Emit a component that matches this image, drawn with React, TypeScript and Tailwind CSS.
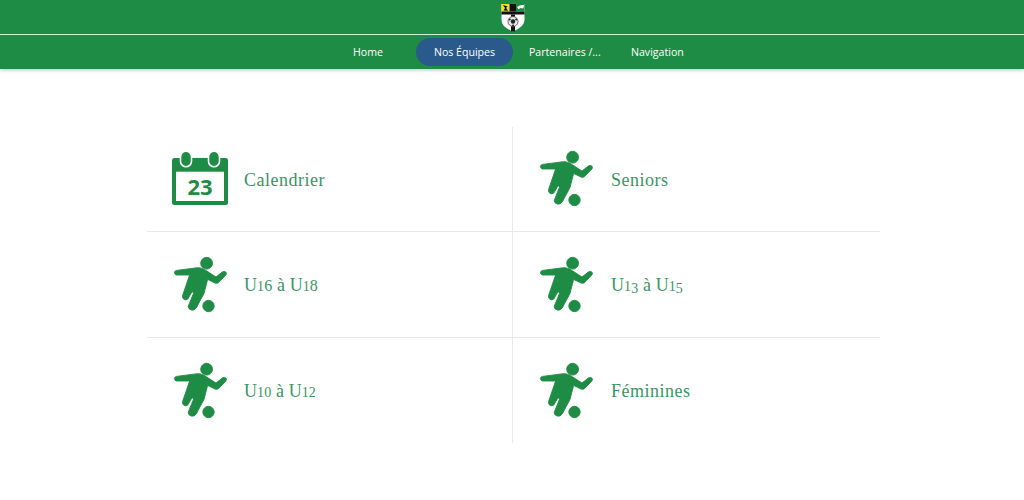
const GREEN = '#1e8c45';

function PlayerIcon() {
  return (
    <svg viewBox="0 0 60 60" className="w-[60px] h-[60px] shrink-0" fill={GREEN} stroke={GREEN} strokeWidth="0.9" strokeLinejoin="round">
      <circle cx="35.6" cy="7.2" r="5.9" />
      <circle cx="37.5" cy="50" r="5.7" />
      <path
        d="M5.5 14.4 L26.3 11.7 Q30 11.4 33 13.3 L45 21 L51.6 15.8 Q53.8 14.8 55.2 16.4 Q55.8 18 54.8 19 L47.6 26.6 Q46 27.8 44 27 L36.6 23.4 L33 37.4 L25.2 52 Q23.2 54.8 20.2 54 Q17.2 53 17.2 50.4 L22.4 37.6 L21.4 35 L16.8 43 Q14.8 44.6 12.8 43.2 Q11 41.6 11.6 39.4 L18.6 19 L5.5 19 Q3.6 18.6 3.4 16.6 Q3.6 14.8 5.5 14.4 Z"
      />
    </svg>
  );
}

function CalendarIcon() {
  return (
    <svg viewBox="0 0 60 60" className="w-[60px] h-[60px] shrink-0">
      <rect x="1" y="8" width="56" height="47" rx="2.5" fill={GREEN} />
      <rect x="5" y="21.7" width="48" height="29.3" fill="#fff" />
      <rect x="9.5" y="1.2" width="11" height="15.6" rx="5.5" fill={GREEN} stroke="#fff" strokeWidth="1.6" />
      <rect x="37.5" y="1.2" width="11" height="15.6" rx="5.5" fill={GREEN} stroke="#fff" strokeWidth="1.6" />
      <text
        x="29"
        y="44.5"
        textAnchor="middle"
        fontFamily="'Open Sans', sans-serif"
        fontWeight="700"
        fontSize="22"
        fill={GREEN}
      >
        23
      </text>
    </svg>
  );
}

function Crest() {
  return (
    <svg viewBox="0 0 26 30" className="w-[26px] h-[30px]">
      <path d="M1.5 2 H24.5 V18 Q24.5 25 13 29.5 Q1.5 25 1.5 18 Z" fill="#fff" />
      <rect x="1.5" y="2" width="8" height="7.5" fill="#f1e21c" />
      <path d="M3 3 L7.8 4.4 L6 5.8 L8 8.8 L3.6 8.4 L5 6 Z" fill="#111" />
      <rect x="9.5" y="2" width="6.5" height="7.5" fill="#111" />
      <rect x="16" y="2" width="8.5" height="7.5" fill="#1c8a45" />
      <path d="M17 5 Q20 2.6 24.2 3.2 L23.2 6.6 L20.5 6 L18.6 7.2 Z" fill="#fff" />
      <rect x="1.5" y="9.5" width="23" height="3" fill="#111" />
      <rect x="11" y="12.5" width="4" height="17" fill="#111" />
      <circle cx="13" cy="19.5" r="5" fill="#e8e8e8" stroke="#444" strokeWidth="0.8" />
      <circle cx="13" cy="19.5" r="2.2" fill="#222" />
      <circle cx="9.8" cy="17.5" r="1" fill="#222" />
      <circle cx="16.2" cy="17.5" r="1" fill="#222" />
      <circle cx="13" cy="23.5" r="1" fill="#222" />
    </svg>
  );
}

// the reference font has old-style figures, no installed serif has them
function OldStyle({ text }: { text: string }) {
  return (
    <>
      {text.split('').map((ch, i) => {
        if ('102'.includes(ch)) return <span key={i} className="text-[14px]">{ch}</span>;
        if ('35'.includes(ch)) return <span key={i} className="text-[14px] align-[-2px]">{ch}</span>;
        if ('68'.includes(ch)) return <span key={i} className="text-[16px]">{ch}</span>;
        return ch;
      })}
    </>
  );
}

const cells = [
  { label: 'Calendrier', calendar: true },
  { label: 'Seniors' },
  { label: 'U16 à U18', tight: true },
  { label: 'U13 à U15', tight: true },
  { label: 'U10 à U12', tight: true },
  { label: 'Féminines' },
];

export default function App() {
  return (
    <div className="min-h-[500px] bg-white font-['Open_Sans',sans-serif]">
      <header className="bg-[#1e8c45] shadow-[0_1px_4px_rgba(0,0,0,0.25)]">
        <div className="h-[34px] flex justify-center items-start pt-[2px] pl-[1px]">
          <Crest />
        </div>
        <div className="h-px bg-[#d5ebdc]" />
        <nav className="h-[34px] flex items-center pl-[335px] text-[10.6px] font-medium text-white">
          <a className="w-[66px] pl-[18px] pt-[2px]">Home</a>
          <a className="ml-[15px] h-[28px] w-[97px] pt-[2px] flex items-center justify-center rounded-full bg-[#2a5a8c]">
            Nos Équipes
          </a>
          <a className="pl-[16px] pt-[2px] w-[102px]">Partenaires /...</a>
          <a className="ml-[16px] pt-[2px]">Navigation</a>
        </nav>
      </header>

      <main className="pt-[58px] pl-[147px]">
        <div className="w-[733px] grid grid-cols-[366px_367px] grid-rows-[105px_106px_105px]">
          {cells.map((cell, i) => (
            <div
              key={cell.label}
              className={`flex items-center pt-[2px] pl-[24px] border-[#e9e9e9] ${i < 4 ? 'border-b' : ''} ${i % 2 === 0 ? 'border-r gap-[13px]' : 'gap-[14px]'}`}
            >
              {cell.calendar ? <CalendarIcon /> : <PlayerIcon />}
              <span className={`font-['Liberation_Serif',serif] text-[18px] text-[#3a9562] ${cell.tight ? 'tracking-[0.1px]' : 'tracking-[0.5px]'}`}>
                <OldStyle text={cell.label} />
              </span>
            </div>
          ))}
        </div>
      </main>
    </div>
  );
}
